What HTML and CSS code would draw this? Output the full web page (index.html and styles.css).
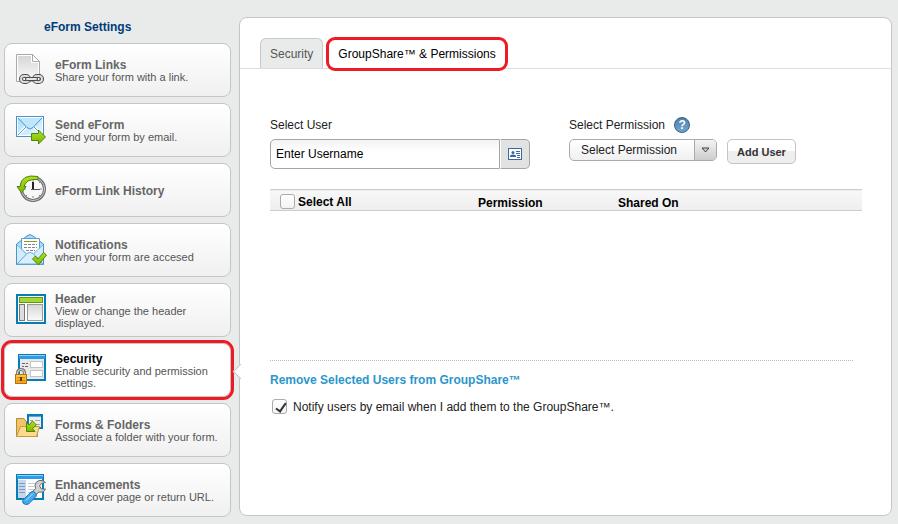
FILE: index.html
```html
<!DOCTYPE html>
<html lang="en">
<head>
  <meta charset="UTF-8">
  <meta name="viewport" content="width=device-width, initial-scale=1.0">
  <title>eForm Settings</title>
  <link rel="stylesheet" href="styles.css">
</head>

<body>
  <div class="page">
    <nav class="sidebar">
      <h1>eForm Settings</h1>

      <a href="#" class="card">
        <svg class="card-icon" viewBox="0 0 34 34">
          <defs>
            <linearGradient id="doc" x1="0" y1="0" x2="0" y2="1"><stop offset="0" stop-color="#d6d6d6"/><stop offset="1" stop-color="#fafafa"/></linearGradient>
            <linearGradient id="sky" x1="0" y1="0" x2="1" y2="1"><stop offset="0" stop-color="#a5dcfb"/><stop offset="1" stop-color="#eaf7ff"/></linearGradient>
            <linearGradient id="green" x1="0" y1="0" x2="0" y2="1"><stop offset="0" stop-color="#b4e01e"/><stop offset="1" stop-color="#78b800"/></linearGradient>
            <linearGradient id="gold" x1="0" y1="0" x2="0" y2="1"><stop offset="0" stop-color="#ffcf3f"/><stop offset="1" stop-color="#f09a1a"/></linearGradient>
          </defs>
          <path d="M2.500 1.500H18.500L25.500 8.500V28.500H2.500Z" fill="#fff" stroke="#aaa"/>
          <path d="M4 3H17V10H24V27H4Z" fill="url(#doc)"/>
          <path d="M18.500 1.500V8.500H25.500Z" fill="#fff" stroke="#aaa"/>
          <g fill="none" stroke="#4c4c4c" stroke-width="4">
            <rect x="7" y="23" width="8" height="6" rx="3"/>
            <rect x="20" y="23" width="8" height="6" rx="3"/>
          </g>
          <g fill="none" stroke="#ddd" stroke-width="2">
            <rect x="7" y="23" width="8" height="6" rx="3"/>
            <rect x="20" y="23" width="8" height="6" rx="3"/>
          </g>
          <rect x="11.500" y="24.500" width="12" height="3" rx="1.500" fill="#e5e5e5" stroke="#4c4c4c"/>
        </svg>
        <span class="card-text"><strong>eForm Links</strong>Share your form with a link.</span>
      </a>

      <a href="#" class="card">
        <svg class="card-icon" viewBox="0 0 34 34">
          <rect x="2.500" y="3.500" width="27" height="20" fill="url(#sky)" stroke="#4a94c9"/>
          <rect x="3.500" y="4.500" width="25" height="18" fill="none" stroke="#fff"/>
          <path d="M4 22L12 14M28 22L20 14" stroke="#fff" stroke-width="3"/>
          <path d="M4 22L12 14M28 22L20 14" stroke="#5a9cc8"/>
          <path d="M4 5L13 14.500Q16 17.500 19 14.500L28 5" fill="#bfe6fc" stroke="#4a94c9"/>
          <path d="M17.500 20.500H24.500V17L31.500 24L24.500 31V27.500H17.500Z" fill="url(#green)" stroke="#4c8512"/>
        </svg>
        <span class="card-text"><strong>Send eForm</strong>Send your form by email.</span>
      </a>

      <a href="#" class="card">
        <svg class="card-icon" viewBox="0 0 34 34">
          <circle cx="19" cy="16" r="11.500" fill="#f8f8f8" stroke="#6a6a6a" stroke-width="3"/>
          <circle cx="19" cy="16" r="11.500" fill="none" stroke="#d0d0d0"/>
          <path d="M19 7V9M19 23V25M10 16H12M26 16H28M13 22L12 23M25 22L26 23M25 10L26 9" stroke="#888"/>
          <path d="M19 9V17" stroke="#222" stroke-width="2"/>
          <path d="M17 16.500H26" stroke="#555"/>
          <path d="M24 3.500Q7 .500 6 13.500H3L7.500 20L12 13.500H10Q12 5.500 24 6.500Z" fill="url(#green)" stroke="#4c8512"/>
        </svg>
        <span class="card-text"><strong>eForm Link History</strong></span>
      </a>

      <a href="#" class="card">
        <svg class="card-icon" viewBox="0 0 34 34">
          <path d="M2.500 11L13 3Q16 0 19 3L29.500 11V31.500H2.500Z" fill="#a9dcf8" stroke="#4a94c9"/>
          <path d="M7.500 5.500H25.500V17L16.500 24L7.500 17Z" fill="#fff" stroke="#5a9fd0"/>
          <path d="M10 8.500H23" stroke="#8c9a10"/>
          <path d="M10 11.500H23M10 14.500H23M12 17.500H21" stroke="#7a8a98" stroke-dasharray="3 1"/>
          <path d="M3 12L12 21L3 31ZM29 12L20 21L29 31Z" fill="#d0edfd"/>
          <path d="M3 12L12.500 20.500M29 12L19.500 20.500" stroke="#7db8de"/>
          <path d="M3 31L13 20.500Q16 18 19 20.500L29 31Z" fill="#d8f0fd" stroke="#6aacd8"/>
          <path d="M18.500 26L21.500 23L24 26L29.500 19.500L32.500 22L24.500 32Z" fill="url(#green)" stroke="#4c8512"/>
        </svg>
        <span class="card-text"><strong>Notifications</strong>when your form are accesed</span>
      </a>

      <a href="#" class="card">
        <svg class="card-icon" viewBox="0 0 34 34">
          <rect x="3" y="2" width="28" height="28" fill="#fff" stroke="#067db5" stroke-width="2"/>
          <rect x="5.500" y="4.500" width="23" height="5" fill="#a6d631" stroke="#5a9a18"/>
          <rect x="5.500" y="11.500" width="5" height="16" fill="#ddd" stroke="#777"/>
          <rect x="13.500" y="11.500" width="15" height="16" fill="url(#doc)" stroke="#999"/>
        </svg>
        <span class="card-text"><strong>Header</strong>View or change the header displayed.</span>
      </a>

      <a href="#" class="card card-active">
        <svg class="card-icon" viewBox="0 0 34 34">
          <rect x="5" y="2" width="26" height="25" fill="#e9e9e9" stroke="#067db5" stroke-width="2"/>
          <rect x="5" y="2" width="26" height="4" fill="#2f9be8"/>
          <path d="M5 2.500H31" stroke="#8fd0fa"/>
          <rect x="16.500" y="8.500" width="12" height="6" fill="#fff" stroke="#c4c4c4"/>
          <rect x="16.500" y="17.500" width="12" height="6" fill="#fff" stroke="#c4c4c4"/>
          <path d="M8 10.500H11M12 10.500H14M8 13.500H10M11 13.500H14" stroke="#666"/>
          <path d="M3.500 22V20Q3.500 16.500 7 16.500Q10.500 16.500 10.500 20V22" fill="none" stroke="#777" stroke-width="3"/>
          <path d="M3.500 22V20Q3.500 16.500 7 16.500Q10.500 16.500 10.500 20V22" fill="none" stroke="#ddd"/>
          <rect x="1.500" y="21.500" width="11" height="9" fill="url(#gold)" stroke="#b8720a"/>
          <path d="M3 24.500H11M3 27.500H11" stroke="#d58a10"/>
          <path d="M7 24V28" stroke="#5d3b05" stroke-width="2"/>
        </svg>
        <span class="card-text"><strong>Security</strong>Enable security and permission settings.</span>
      </a>

      <a href="#" class="card">
        <svg class="card-icon" viewBox="0 0 34 34">
          <path d="M2.500 23.500V5.500H10L12 8.500H23.500V23.500Z" fill="#f0c468" stroke="#b98a35"/>
          <rect x="14" y="2" width="14" height="13" fill="#eee" stroke="#067db5" stroke-width="2"/>
          <path d="M15 3.500H27" stroke="#4aabec"/>
          <path d="M16 7.500H19M21 7.500H26M21 11.500H26" stroke="#aaa"/>
          <path d="M2.500 23.500L6.500 13.500H25.500L22.500 23.500Z" fill="#fcdc8c" stroke="#c59a42"/>
          <path d="M12.500 9.500L15 12L18.500 8L22.500 12L18.500 15.500L21 18.500H12.500Z" fill="url(#green)" stroke="#4c8512"/>
        </svg>
        <span class="card-text"><strong>Forms &amp; Folders</strong>Associate a folder with your form.</span>
      </a>

      <a href="#" class="card">
        <svg class="card-icon" viewBox="0 0 34 34">
          <rect x="3" y="2" width="26" height="24" fill="#fff" stroke="#067db5" stroke-width="2"/>
          <rect x="3" y="2" width="26" height="4" fill="#2f9be8"/>
          <path d="M3 2.500H29" stroke="#8fd0fa"/>
          <rect x="4" y="7" width="8" height="18" fill="#c5d6ea"/>
          <path d="M5 10.500H11M5 13.500H11M5 16.500H11M5 19.500H11" stroke="#7f9cc0"/>
          <path d="M14 10.500H21M14 13.500H20M14 16.500H20M14 19.500H18" stroke="#c0ccdc"/>
          <path d="M31.500 9.500Q27 5.500 22.500 9Q20 12 21.500 15.500L18 19.500L21 22.500L25 19Q29.500 20 31.500 16L27.500 16L25.500 13L27.500 10.500Z" fill="#d0d0d0" stroke="#6a6a6a"/>
          <path d="M17.500 18.500Q20 18 21.500 20Q23 22 22 23.500L14.500 31Q11.500 32.500 9 30Q8 28 9.500 26.500Z" fill="#44aaf0" stroke="#1f72b0"/>
          <path d="M19 20.500L12 27.500" stroke="#b5e2fc"/>
        </svg>
        <span class="card-text"><strong>Enhancements</strong>Add a cover page or return URL.</span>
      </a>
    </nav>

    <main class="panel">
      <div class="tabs">
        <button type="button" class="tab">Security</button>
        <button type="button" class="tab tab-active">GroupShare™ &amp; Permissions</button>
      </div>

      <form class="content">
        <div class="fields">
          <div class="field field-user">
            <label for="user">Select User</label>
            <div class="user-box">
              <input type="text" id="user" value="Enter Username">
              <button type="button" class="contacts" aria-label="Browse users">
                <svg width="14" height="12" viewBox="0 0 14 12">
                  <rect x=".5" y=".5" width="13" height="11" fill="#fff" stroke="#3b68a0"/>
                  <path d="M0 .500H14M0 11.500H14" stroke="#3b68a0"/>
                  <circle cx="5" cy="4.500" r="1.500" fill="#3b68a0"/>
                  <path d="M2 9V7.500Q5 5.500 8 7.500V9Z" fill="#3b68a0"/>
                  <path d="M8 3.500H12M8 5.500H12M9 7.500H12M9 9.500H12" stroke="#3b68a0"/>
                </svg>
              </button>
            </div>
          </div>

          <div class="field">
            <div class="label-row">
              <label for="permission">Select Permission</label>
              <a href="#" class="help" aria-label="Help">?</a>
            </div>
            <div class="permission-row">
              <div class="select-box">
                <select id="permission">
                  <option>Select Permission</option>
                </select>
                <span class="select-arrow">
                  <svg width="9" height="6" viewBox="0 0 9 6"><path d="M1 1H8L4.500 5Z" fill="#ccc" stroke="#444"/></svg>
                </span>
              </div>
              <button type="button" class="add-user">Add User</button>
            </div>
          </div>
        </div>

        <div class="users">
          <table>
            <thead>
              <tr>
                <th class="col-user"><label class="check-label"><input type="checkbox">Select All</label></th>
                <th class="col-permission">Permission</th>
                <th>Shared On</th>
              </tr>
            </thead>
          </table>
        </div>

        <div class="footer">
          <a href="#" class="remove">Remove Selected Users from GroupShare™</a>
          <label class="check-label notify"><input type="checkbox" checked>Notify users by email when I add them to the GroupShare™.</label>
        </div>
      </form>
    </main>
  </div>
</body>
</html>
```
FILE: styles.css
```css
* {
  box-sizing: border-box;
}
body {
  margin: 0;
  background: #e9ebea;
  color: #222;
  font-family: "Liberation Sans", Arial, Helvetica, sans-serif;
  font-size: 12px;
  line-height: 14px;
}
button, input, select {
  font-family: inherit;
  font-size: 12px;
}
.page {
  display: flex;
  gap: 8px;
  padding: 17px 6px 7px 4px;
}

/* left menu */
.sidebar {
  flex: none;
  width: 227px;
  display: flex;
  flex-direction: column;
  gap: 6px;
}
.sidebar h1 {
  margin: 0 0 0 40px;
  font-size: 12px;
  line-height: 20px;
  color: #003c78;
}
.card {
  position: relative;
  display: flex;
  align-items: center;
  gap: 7px;
  min-height: 54px;
  padding: 0 9px;
  border: 1px solid #c4c6c5;
  border-radius: 8px;
  background: linear-gradient(#fff, #f0f0f0);
  color: #555;
  font-size: 11px;
  line-height: 12px;
  text-decoration: none;
}
.card-icon {
  flex: none;
  width: 34px;
  height: 34px;
}
.card-text {
  padding-top: 2px;
}
.card-text strong {
  display: block;
  color: #666;
  font-size: 12px;
}
.card-active {
  background: #fff;
  outline: 3px solid #ed1c24;
}
.card-active strong {
  color: #000;
}
/* pointer that joins the open section to the panel */
.card-active::after {
  content: "";
  position: absolute;
  top: 22px;
  right: -16px;
  width: 10px;
  height: 10px;
  border-left: 1px solid #c4c6c5;
  border-bottom: 1px solid #c4c6c5;
  background: #fff;
  transform: rotate(45deg);
}

/* panel */
.panel {
  flex: 1;
  margin-bottom: 1px;
  border: 1px solid #c4c6c5;
  border-radius: 8px;
  background: #fff;
}
.tabs {
  display: flex;
  align-items: flex-end;
  gap: 6px;
  padding: 20px 20px 0;
  border-bottom: 1px solid #ddd;
}
.tab {
  height: 30px;
  padding: 0 9px;
  border: 1px solid #c8c8c8;
  border-bottom: 0;
  border-radius: 6px 6px 0 0;
  background: #e9ebea;
  color: #555;
}
.tab-active {
  height: 28px;
  border: 0;
  border-radius: 6px;
  outline: 3px solid #ed1c24;
  background: #fff;
  color: #000;
}
.content {
  padding: 48px 29px 0 30px;
}
.fields {
  display: flex;
  gap: 39px;
}
.field-user {
  width: 260px;
}
.field > label, .label-row {
  display: flex;
  align-items: center;
  height: 16px;
  margin-bottom: 6px;
}
.user-box {
  display: flex;
}
.user-box input {
  flex: 1;
  min-width: 0;
  height: 30px;
  padding: 0 5px;
  border: 1px solid #a5a5a5;
  border-radius: 5px 0 0 5px;
  background: linear-gradient(#f3f3f3, #fff 12px);
  color: #000;
}
.contacts {
  display: flex;
  align-items: center;
  justify-content: center;
  width: 30px;
  padding: 0;
  border: 1px solid #a5a5a5;
  border-left: 1px solid #fff;
  border-radius: 0 5px 5px 0;
  background: #e1e3e3;
}
.label-row {
  gap: 9px;
}
.help {
  width: 16px;
  height: 16px;
  border: 1px solid #2f5f8c;
  border-radius: 50%;
  background: linear-gradient(#4d80ad, #76a6cc);
  color: #fff;
  font-size: 12px;
  font-weight: bold;
  line-height: 14px;
  text-align: center;
  text-decoration: none;
}
.permission-row {
  display: flex;
  align-items: flex-start;
  gap: 10px;
}
.select-box {
  position: relative;
}
.select-box select {
  display: block;
  appearance: none;
  width: 148px;
  height: 22px;
  padding: 0 30px 0 11px;
  border: 1px solid #aaa;
  border-radius: 5px;
  background: linear-gradient(#fff, #f0f0f0);
  color: #222;
}
.select-arrow {
  position: absolute;
  top: 1px;
  right: 1px;
  display: flex;
  align-items: center;
  justify-content: center;
  width: 22px;
  height: 20px;
  border-left: 1px solid #aaa;
  border-radius: 0 4px 4px 0;
  background: linear-gradient(#f4f4f4, #ccc);
  pointer-events: none;
}
.add-user {
  height: 25px;
  padding: 0 9px;
  border: 1px solid #c4c4c4;
  border-radius: 5px;
  background: linear-gradient(#fff 50%, #eee 50%);
  color: #333;
  font-size: 11px;
  font-weight: bold;
}

/* shared users */
.users {
  min-height: 171px;
  margin-top: 20px;
}
table {
  width: 100%;
  border-collapse: collapse;
  table-layout: fixed;
}
thead {
  border-top: 1px solid #ccc;
  border-bottom: 1px solid #ccc;
  background: linear-gradient(#f8f8f8, #eee);
}
th {
  height: 21px;
  padding: 5px 0 0;
  color: #000;
  text-align: left;
}
.col-user {
  width: 208px;
  padding: 3px 0 0 10px;
}
.col-permission {
  width: 140px;
}
.check-label {
  display: flex;
  align-items: center;
  gap: 3px;
}
.check-label input {
  position: relative;
  appearance: none;
  flex: none;
  width: 15px;
  height: 15px;
  margin: 0;
  border: 1px solid #aaa;
  border-radius: 3px;
  background: linear-gradient(#fff, #f3f3f3);
}
.check-label input:checked::after {
  content: "";
  position: absolute;
  top: 1px;
  left: 5px;
  width: 4px;
  height: 9px;
  border-right: 2px solid #333;
  border-bottom: 2px solid #333;
  transform: rotate(35deg);
}
.footer {
  margin-right: 9px;
  padding-top: 12px;
  border-top: 1px dotted #bbb;
}
.remove {
  color: #2b96cc;
  font-weight: bold;
  text-decoration: none;
}
.notify {
  gap: 6px;
  margin-top: 12px;
  padding-left: 2px;
}
```
